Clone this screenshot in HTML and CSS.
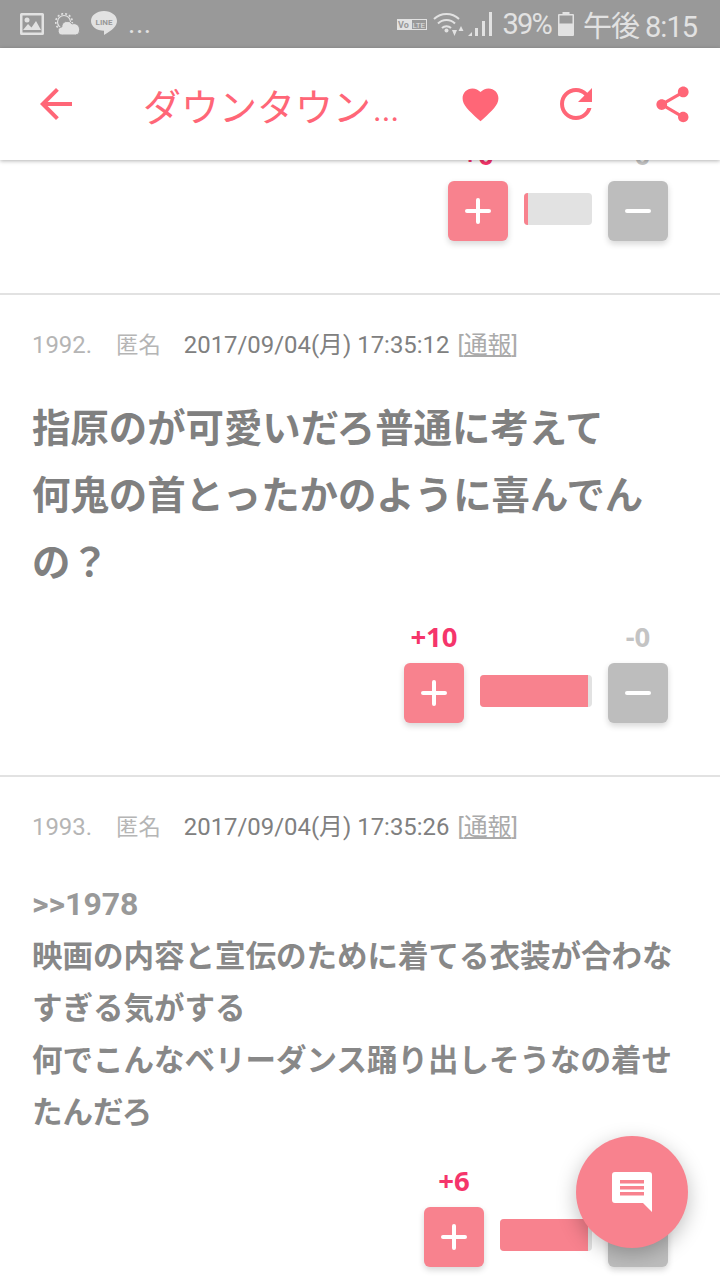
FILE: index.html
```html
<!DOCTYPE html>
<html lang="ja">
  <head>
    <meta charset="UTF-8" />
    <meta name="viewport" content="width=device-width, initial-scale=1.0" />
    <title>ダウンタウン</title>
    <link rel="stylesheet" href="styles.css">
  </head>
  <body>
    <div class="status-bar">
      <svg class="st-image" viewBox="0 0 24 22" width="24" height="22">
        <path fill="#e2e2e2" fill-rule="evenodd" d="M1.500 0h21A1.500 1.500 0 0 1 24 1.500v19a1.500 1.500 0 0 1-1.500 1.500h-21A1.500 1.500 0 0 1 0 20.500v-19A1.500 1.500 0 0 1 1.500 0zM2.500 2.500v17h19v-17z"/>
        <circle cx="7" cy="7" r="2.500" fill="#e2e2e2"/>
        <path fill="#e2e2e2" d="M3 17l5-6 3.500 3.500L16 8l5 9z"/>
      </svg>
      <svg class="st-weather" viewBox="0 0 25 22" width="25" height="22">
        <circle cx="9" cy="9" r="6.500" fill="none" stroke="#e2e2e2" stroke-width="1.200"/>
        <circle cx="9" cy="9" r="8.300" fill="none" stroke="#e2e2e2" stroke-width="1.600" stroke-dasharray="2 2"/>
        <path fill="#e2e2e2" stroke="#999" stroke-width="1" d="M7.500 22a4 4 0 0 1-.7-8A5.500 5.500 0 0 1 17 11a5.500 5.500 0 0 1 7.500 5.500V18a4 4 0 0 1-4 4z"/>
      </svg>
      <svg class="st-line" viewBox="0 0 26 24" width="26" height="24">
        <path fill="#e2e2e2" d="M13 0c7.200 0 13 4.400 13 10 0 5-5 9.500-13 14v-4.200C5.800 19.800 0 15.500 0 10 0 4.400 5.800 0 13 0z"/>
        <text x="13" y="13.500" text-anchor="middle" class="line-text">LINE</text>
      </svg>
      <span class="st-more">...</span>
      <span class="st-spacer"></span>
      <svg class="st-volte" viewBox="0 0 30 11" width="30" height="11">
        <rect width="30" height="11" fill="#e2e2e2"/>
        <rect x="15" y="1" width="14" height="9" fill="#999"/>
        <text x="1" y="9" class="volte-a">Vo</text>
        <text x="15.500" y="9" class="volte-b">LTE</text>
      </svg>
      <svg class="st-wifi" viewBox="0 0 31 24" width="31" height="24">
        <g fill="none" stroke="#e2e2e2" stroke-width="2">
          <path d="M1 7a18 18 0 0 1 25 0"/>
          <path d="M5 11.500a12 12 0 0 1 17 0"/>
          <path d="M9 16a6.500 6.500 0 0 1 9 0"/>
        </g>
        <circle cx="13.500" cy="18.500" r="2" fill="#e2e2e2"/>
        <path fill="#e2e2e2" d="M19 18h5l-2.500 6zM25.500 19h5l-2.500-5z"/>
      </svg>
      <svg class="st-signal" viewBox="0 0 25 24" width="25" height="24">
        <path fill="#e2e2e2" d="M0 24l4-4v4zM7 16h3v8H7zM14 9h3v15h-3zM21 0h3v24h-3z"/>
      </svg>
      <span class="st-text st-battery-text">39%</span>
      <svg class="st-battery" viewBox="0 0 16 24" width="16" height="24">
        <path fill="#e2e2e2" d="M4.500 0h7v2H15a1 1 0 0 1 1 1v20a1 1 0 0 1-1 1H1a1 1 0 0 1-1-1V3a1 1 0 0 1 1-1h3.500z"/>
        <rect x="1.500" y="3.500" width="13" height="8" fill="#999"/>
      </svg>
      <span class="st-text st-time">午後 8:15</span>
    </div>

    <header class="app-bar">
      <svg class="back-icon" viewBox="0 0 24 24" width="48" height="48">
        <path d="M20 11H7.830l5.590-5.590L12 4l-8 8 8 8 1.410-1.410L7.830 13H20v-2z"/>
      </svg>
      <h1 class="title">ダウンタウン<span class="title-more">...</span></h1>
      <div class="action">
        <svg viewBox="0 0 24 24" width="43" height="43">
          <path d="M12 21.350l-1.450-1.320C5.400 15.360 2 12.280 2 8.500 2 5.420 4.420 3 7.500 3c1.740 0 3.410.810 4.500 2.090C13.090 3.810 14.760 3 16.500 3 19.580 3 22 5.420 22 8.500c0 3.780-3.400 6.860-8.550 11.540L12 21.350z"/>
        </svg>
      </div>
      <div class="action">
        <svg viewBox="0 0 24 24" width="48" height="48">
          <path d="M17.650 6.350C16.200 4.900 14.210 4 12 4c-4.420 0-7.990 3.580-7.990 8s3.570 8 7.990 8c3.730 0 6.840-2.550 7.730-6h-2.080c-.820 2.330-3.040 4-5.650 4-3.310 0-6-2.690-6-6s2.690-6 6-6c1.660 0 3.140.690 4.220 1.780L13 11h7V4l-2.350 2.350z"/>
        </svg>
      </div>
      <div class="action">
        <svg viewBox="0 0 24 24" width="43" height="43">
          <path d="M18 16.080c-.760 0-1.440.300-1.960.770L8.910 12.700c.050-.230.090-.460.090-.700s-.040-.470-.090-.700l7.050-4.110c.540.500 1.250.810 2.040.810 1.660 0 3-1.340 3-3s-1.340-3-3-3-3 1.340-3 3c0 .240.040.470.090.700L8.040 9.810C7.500 9.310 6.790 9 6 9c-1.660 0-3 1.340-3 3s1.340 3 3 3c.790 0 1.500-.310 2.040-.810l7.120 4.160c-.050.210-.080.430-.080.650 0 1.610 1.310 2.920 2.920 2.920 1.610 0 2.920-1.310 2.920-2.920s-1.310-2.920-2.920-2.920z"/>
        </svg>
      </div>
    </header>

    <main class="feed">
      <article class="post post-cut">
        <div class="votes">
          <div class="vote">
            <span class="count count-plus">+0</span>
            <button class="btn btn-plus"><span class="sign sign-plus"></span></button>
          </div>
          <div class="bar bar-small"><div class="bar-fill" style="width: 4px"></div></div>
          <div class="vote">
            <span class="count count-minus">-0</span>
            <button class="btn btn-minus"><span class="sign"></span></button>
          </div>
        </div>
      </article>

      <article class="post">
        <div class="meta">
          <span class="num">1992.</span>
          <span class="name">匿名</span>
          <span class="date">2017/09/04(月) 17:35:12</span>
          <span class="report">[<u>通報</u>]</span>
        </div>
        <p class="body body-large">指原のが可愛いだろ普通に考えて<br />何鬼の首とったかのように喜んでんの？</p>
        <div class="votes">
          <div class="vote">
            <span class="count count-plus">+10</span>
            <button class="btn btn-plus"><span class="sign sign-plus"></span></button>
          </div>
          <div class="bar bar-large"><div class="bar-fill" style="width: 108px"></div></div>
          <div class="vote">
            <span class="count count-minus">-0</span>
            <button class="btn btn-minus"><span class="sign"></span></button>
          </div>
        </div>
      </article>

      <article class="post">
        <div class="meta">
          <span class="num">1993.</span>
          <span class="name">匿名</span>
          <span class="date">2017/09/04(月) 17:35:26</span>
          <span class="report">[<u>通報</u>]</span>
        </div>
        <p class="body"><span class="quote">&gt;&gt;1978</span><br />映画の内容と宣伝のために着てる衣装が合わなすぎる気がする<br />何でこんなベリーダンス踊り出しそうなの着せたんだろ</p>
        <div class="votes">
          <div class="vote">
            <span class="count count-plus">+6</span>
            <button class="btn btn-plus"><span class="sign sign-plus"></span></button>
          </div>
          <div class="bar bar-medium"><div class="bar-fill" style="width: 88px"></div></div>
          <div class="vote">
            <span class="count count-minus">-0</span>
            <button class="btn btn-minus"><span class="sign"></span></button>
          </div>
        </div>
      </article>
    </main>

    <button class="fab">
      <svg viewBox="0 0 40 40" width="40" height="40">
        <path fill="#fff" d="M3 0h34a3 3 0 0 1 3 3v37l-9-9H3a3 3 0 0 1-3-3V3a3 3 0 0 1 3-3z"/>
        <path fill="#f8828e" d="M8 8h24v3.500H8zM8 14h24v3.500H8zM8 20h24v3.500H8z"/>
      </svg>
    </button>
  </body>
</html>
```

FILE: styles.css
```css
html,
body {
  margin: 0;
  height: 1280px;
  overflow: hidden;
}

body {
  position: relative;
  background-color: #fff;
  font-family: Roboto, "Noto Sans CJK JP", sans-serif;
}

/* status bar */
.status-bar {
  display: flex;
  align-items: center;
  height: 48px;
  padding: 0 23px 0 20px;
  background-color: #999;
  color: #e2e2e2;
}

.st-weather {
  margin-left: 11px;
}
.st-line {
  margin: -2px 0 0 11px;
}
.st-more {
  margin: 0 0 0 11px;
  font-size: 28px;
  letter-spacing: 0.500px;
  line-height: 36px;
}
.st-spacer {
  flex: 1;
}
.st-wifi {
  margin-left: 6px;
}
.st-signal {
  margin-left: 4px;
}
.st-text {
  font-size: 29px;
  white-space: nowrap;
}
.st-battery-text {
  margin-left: 9px;
  letter-spacing: -1.800px;
}
.st-battery {
  margin-left: 7px;
}
.st-time {
  margin-left: 9px;
  letter-spacing: -1px;
}
.line-text {
  font: bold 8px Roboto, sans-serif;
  fill: #999;
}
.volte-a {
  font: bold 9px Roboto, sans-serif;
  fill: #999;
}
.volte-b {
  font: 8px Roboto, sans-serif;
  fill: #e2e2e2;
}

/* app bar */
.app-bar {
  position: relative;
  z-index: 2;
  display: flex;
  align-items: center;
  height: 112px;
  padding-left: 32px;
  background-color: #fff;
  box-shadow: 0 1px 4px rgba(0, 0, 0, 0.3);
}

.app-bar svg {
  display: block;
  fill: #ff6677;
}

.title {
  flex: 1;
  margin: 0 0 0 63px;
  font-size: 38px;
  font-weight: 400;
  color: #ff6677;
  white-space: nowrap;
}

.title-more {
  margin-left: 2px;
  font-size: 33px;
}

.action {
  display: flex;
  justify-content: center;
  width: 96px;
}

/* list */
.feed {
  margin-top: -21px;
}

.post {
  padding: 32px 32px 52px;
  border-bottom: 2px solid #e2e2e2;
}

.post-cut {
  padding-top: 0;
}

.meta {
  display: flex;
  gap: 24px;
  font-size: 23.900px;
  line-height: 36px;
  color: #b5b5b5;
  white-space: nowrap;
}

.name {
  margin-right: -1px;
  font-size: 22.400px;
}

.date {
  color: #808080;
}

.report {
  margin-left: -16px;
  color: #aaa;
}

.body {
  margin: 33px 0 26px;
  font-size: 30.500px;
  font-weight: 700;
  line-height: 52px;
  color: #888;
}

.body-large {
  margin: 32px 0 25px;
  font-size: 38.400px;
  line-height: 67px;
  color: #808080;
}

.quote {
  font-size: 32px;
  color: #999;
}

/* votes */
.votes {
  display: flex;
  justify-content: flex-end;
  align-items: flex-end;
  padding-right: 20px;
}

.vote {
  display: flex;
  flex-direction: column;
  align-items: center;
  gap: 10px;
}

.count {
  font-family: "Noto Sans", Roboto, sans-serif;
  font-size: 27.500px;
  font-weight: 700;
  line-height: 32px;
}
.count-plus {
  color: #f5356b;
}
.count-minus {
  color: #c4c4c4;
}

.btn {
  display: flex;
  align-items: center;
  justify-content: center;
  width: 60px;
  height: 60px;
  padding: 0;
  border: 0;
  border-radius: 6px;
  box-shadow: 0 3px 6px rgba(0, 0, 0, 0.16);
}
.btn-plus {
  background-color: #f8828e;
}
.btn-minus {
  background-color: #bdbdbd;
}

.sign {
  position: relative;
  display: block;
  width: 26px;
  height: 4px;
  border-radius: 2px;
  background-color: #fff;
}
.sign-plus::after {
  content: "";
  position: absolute;
  left: 11px;
  top: -11px;
  width: 4px;
  height: 26px;
  border-radius: 2px;
  background-color: #fff;
}

.bar {
  height: 32px;
  margin: 0 16px 16px;
  border-radius: 4px;
  background-color: #e2e2e2;
  overflow: hidden;
}
.bar-small {
  width: 68px;
}
.bar-medium {
  width: 92px;
}
.bar-large {
  width: 112px;
}
.bar-fill {
  height: 100%;
  background-color: #f8828e;
}

/* floating button */
.fab {
  position: absolute;
  right: 32px;
  bottom: 32px;
  z-index: 3;
  display: flex;
  align-items: center;
  justify-content: center;
  width: 112px;
  height: 112px;
  padding: 0;
  border: 0;
  border-radius: 50%;
  background-color: #f8828e;
  box-shadow: 0 6px 20px rgba(0, 0, 0, 0.25);
}
```
